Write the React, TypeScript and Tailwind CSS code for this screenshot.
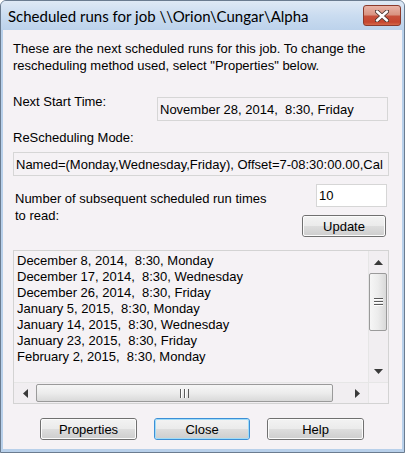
import React from "react";

function Btn({ children, className, focused }: { children: React.ReactNode; className: string; focused?: boolean }) {
  return (
    <div
      className={
        "h-[22px] rounded-[3px] border " +
        (focused ? "border-[#3c8fd6] " : "border-[#707070] ") +
        className
      }
    >
      <div
        className={
          "h-full w-full rounded-[2px] border flex items-center justify-center text-[13px] leading-none text-black " +
          (focused
            ? "border-[#9fdcf8] bg-[linear-gradient(to_bottom,#f2f2f2_0%,#ebebeb_48%,#dddddd_52%,#cfcfcf_100%)]"
            : "border-[#fbfbfb] bg-[linear-gradient(to_bottom,#f2f2f2_0%,#ebebeb_48%,#dddddd_52%,#cfcfcf_100%)]")
        }
      >
        {children}
      </div>
    </div>
  );
}

function UpArrow() {
  return (
    <svg width="9" height="5" viewBox="0 0 9 5">
      <path d="M4.5 0 L9 5 H0 Z" fill="#3a3a3a" />
    </svg>
  );
}
function DownArrow() {
  return (
    <svg width="9" height="5" viewBox="0 0 9 5">
      <path d="M0 0 H9 L4.5 5 Z" fill="#3a3a3a" />
    </svg>
  );
}
function LeftArrow() {
  return (
    <svg width="5" height="9" viewBox="0 0 5 9">
      <path d="M5 0 V9 L0 4.5 Z" fill="#3a3a3a" />
    </svg>
  );
}
function RightArrow() {
  return (
    <svg width="5" height="9" viewBox="0 0 5 9">
      <path d="M0 0 V9 L5 4.5 Z" fill="#3a3a3a" />
    </svg>
  );
}

function HGrip() {
  return (
    <svg width="9" height="8" viewBox="0 0 9 8">
      <rect x="0" y="0" width="9" height="1" fill="#5a5a5a" />
      <rect x="0" y="1" width="9" height="1" fill="#ffffff" />
      <rect x="0" y="3" width="9" height="1" fill="#5a5a5a" />
      <rect x="0" y="4" width="9" height="1" fill="#ffffff" />
      <rect x="0" y="6" width="9" height="1" fill="#5a5a5a" />
      <rect x="0" y="7" width="9" height="1" fill="#ffffff" />
    </svg>
  );
}
function VGrip() {
  return (
    <svg width="9" height="9" viewBox="0 0 9 9">
      <rect x="0" y="0" width="1" height="9" fill="#5a5a5a" />
      <rect x="1" y="0" width="1" height="9" fill="#ffffff" />
      <rect x="4" y="0" width="1" height="9" fill="#5a5a5a" />
      <rect x="5" y="0" width="1" height="9" fill="#ffffff" />
      <rect x="8" y="0" width="1" height="9" fill="#5a5a5a" />
    </svg>
  );
}

function CloseX() {
  return (
    <svg width="14" height="12" viewBox="0 0 14 12">
      <path d="M2 1.5 L12 10.5 M12 1.5 L2 10.5" stroke="#4a3530" strokeWidth="4.2" strokeLinecap="round" />
      <path d="M2 1.5 L12 10.5 M12 1.5 L2 10.5" stroke="#ffffff" strokeWidth="2.4" strokeLinecap="round" />
    </svg>
  );
}

const runs = [
  "December 8, 2014,  8:30, Monday",
  "December 17, 2014,  8:30, Wednesday",
  "December 26, 2014,  8:30, Friday",
  "January 5, 2015,  8:30, Monday",
  "January 14, 2015,  8:30, Wednesday",
  "January 23, 2015,  8:30, Friday",
  "February 2, 2015,  8:30, Monday",
];

export default function App() {
  return (
    <div className="w-[405px] h-[453px] bg-[#b8d0ea] border border-[#6b7c90] rounded-t-[6px] flex flex-col overflow-hidden">
      {/* Title bar */}
      <div className="h-[29px] shrink-0 flex items-start bg-[linear-gradient(to_bottom,#dfe9f5_0%,#cadcf0_50%,#bcd2eb_100%)]">
        <div className="pl-[7px] pt-[5px] text-[15px] leading-[20px] text-black font-['Lato','Noto_Sans',sans-serif] whitespace-pre">
          {"Scheduled runs for job \\\\Orion\\Cungar\\Alpha"}
        </div>
        <div className="ml-auto mr-[3px] mt-[4px] w-[38px] h-[21px] rounded-[3px] border border-[#8b3a2c] bg-[linear-gradient(to_bottom,#e9b3a7_0%,#d99482_45%,#c7503b_55%,#c6462f_85%,#d4694b_100%)] flex items-center justify-center">
          <CloseX />
        </div>
      </div>

      {/* Client area */}
      <div className="flex-1 mx-[2px] mb-[3px] bg-[#f5f2f5] pl-[10px] pr-[13px] pt-[10px] flex flex-col text-[13px] leading-[17px] text-black font-['Liberation_Sans',Arial,sans-serif]">
        <p>
          These are the next scheduled runs for this job. To change the
          <br />
          rescheduling method used, select "Properties" below.
        </p>

        <div className="mt-[19px] flex items-start">
          <span>Next Start Time:</span>
          <div className="ml-auto mt-[4px] mr-[1px] w-[231px] h-[24px] border border-[#d6d6d6] flex items-center pl-[2px] whitespace-pre">
            November 28, 2014,  8:30, Friday
          </div>
        </div>

        <div className="mt-[8px]">ReScheduling Mode:</div>

        <div className="mt-[6px] h-[24px] border border-[#d6d6d6] flex items-center pl-[2px] whitespace-nowrap overflow-hidden">
          Named=(Monday,Wednesday,Friday), Offset=7-08:30:00.00,Cal
        </div>

        <div className="mt-[8px] flex">
          <div className="pt-[6px] pl-[2px]">
            Number of subsequent scheduled run times
            <br />
            to read:
          </div>
          <div className="ml-auto mr-[2px] flex flex-col items-end">
            <div className="w-[71px] h-[23px] bg-white border border-[#d6d6d6] pl-[2px] flex items-center">10</div>
            <Btn className="mt-[8px] mr-[1px] w-[84px]">Update</Btn>
          </div>
        </div>

        {/* List box */}
        <div className="mt-[13px] h-[154px] border border-[#d3d3d3] flex flex-col">
          <div className="flex-1 flex min-h-0">
            <div className="flex-1 pl-[3px] pt-[2px] leading-[16px] whitespace-pre overflow-hidden">
              {runs.map((r) => (
                <div key={r}>{r}</div>
              ))}
            </div>
            <div className="w-[20px] border-l border-[#e6e6e6] bg-[#f1eef1] flex flex-col">
              <div className="h-[22px] flex items-center justify-center">
                <UpArrow />
              </div>
              <div className="h-[58px] mr-[1px] rounded-[2px] border border-[#9a9a9a] bg-[linear-gradient(to_right,#f6f6f6_0%,#ececec_50%,#d9d9d9_100%)] flex items-center justify-center">
                <HGrip />
              </div>
              <div className="flex-1" />
              <div className="h-[22px] flex items-center justify-center">
                <DownArrow />
              </div>
            </div>
          </div>
          <div className="h-[21px] flex border-t border-[#e6e6e6] bg-[#f1eef1]">
            <div className="w-[22px] flex items-center justify-center">
              <LeftArrow />
            </div>
            <div className="w-[297px] my-[1px] rounded-[2px] border border-[#9a9a9a] bg-[linear-gradient(to_bottom,#f6f6f6_0%,#ececec_50%,#d9d9d9_100%)] flex items-center justify-center">
              <VGrip />
            </div>
            <div className="flex-1" />
            <div className="w-[22px] flex items-center justify-center">
              <RightArrow />
            </div>
            <div className="w-[20px] border-l border-[#e6e6e6] bg-[#f5f2f5]" />
          </div>
        </div>

        <div className="mt-[14px] pl-[2px] flex justify-center gap-[17px]">
          <Btn className="w-[97px]">Properties</Btn>
          <Btn className="w-[96px]" focused>
            Close
          </Btn>
          <Btn className="w-[97px]">Help</Btn>
        </div>
      </div>
    </div>
  );
}
